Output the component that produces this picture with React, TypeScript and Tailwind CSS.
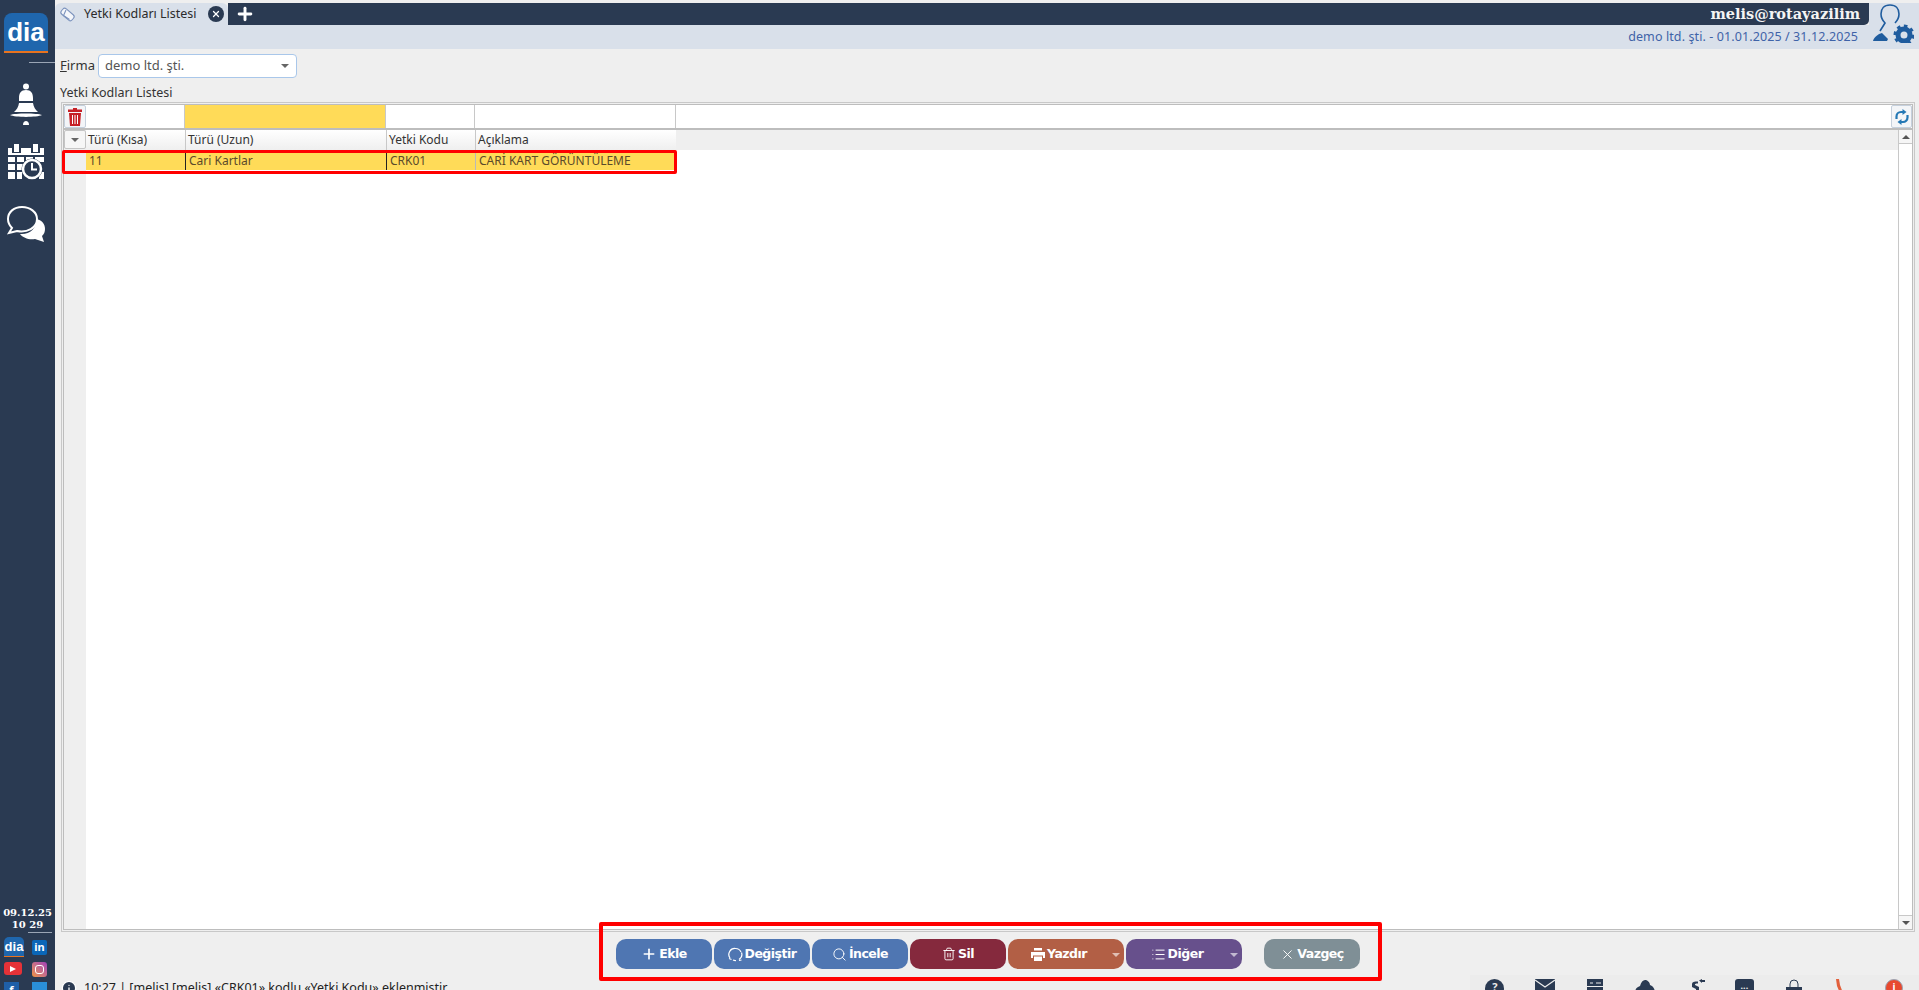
import type { ReactNode } from 'react'
import { Plus, Search, Trash2, X, List, Info } from 'lucide-react'

const uiFont = "font-['Noto_Sans',sans-serif]"

function Caret({ className = 'border-t-[#666]' }: { className?: string }) {
  return <span className={`block h-0 w-0 border-x-[4px] border-t-[4px] border-x-transparent ${className}`} />
}

function DiaLogo({ small }: { small?: boolean }) {
  return (
    <div className={small
      ? "flex h-[20px] w-[20px] items-center justify-center rounded-t-[5px] border-b border-[#e8731f] bg-[#1f66ad] font-['Liberation_Sans',sans-serif] text-[13px] font-bold text-white"
      : "flex h-[40px] w-[44px] items-center justify-center rounded-t-[8px] border-b-2 border-[#e8731f] bg-[#1f66ad] font-['Liberation_Sans',sans-serif] text-[26px] font-bold text-white"}>
      dia
    </div>
  )
}

function Bell() {
  return (
    <svg width="32" height="43" viewBox="0 0 32 43" fill="white">
      <circle cx="16" cy="3.500" r="3" />
      <path d="M16 7c-5 0-7 3-7 8v3h14v-3c0-5-2-8-7-8zM9 20h14c.5 4 2.500 7 5 9H4c2.500-2 4.500-5 5-9z" />
      <path d="M0 32c5-2 27-2 32 0-5 2.500-27 2.500-32 0z" />
      <path d="M13 42c0-3 1.500-4 3-4s3 1 3 4z" />
    </svg>
  )
}

function CalendarClock() {
  return (
    <svg width="36" height="36" viewBox="0 0 36 36" fill="white">
      <rect x="6" y="0" width="5" height="8" />
      <rect x="25" y="0" width="5" height="8" />
      <path d="M0 4h4v5h9V4h10v5h9V4h4v7H0z" />
      <path d="M0 13h7v5H0zM9 13h7v5H9zM18 13h7v5h-7zM27 13h9v5h-9zM0 20h7v6H0zM9 20h7v6H9zM0 28h7v7H0zM9 28h5v7H9zM31 28h5v7h-5z" />
      <circle cx="24" cy="25" r="10.500" fill="#2a3a52" />
      <circle cx="24" cy="25" r="9" fill="none" stroke="white" strokeWidth="2.500" />
      <path d="M24 19v6.500h5" fill="none" stroke="white" strokeWidth="2" />
    </svg>
  )
}

function Bubbles() {
  return (
    <svg width="40" height="38" viewBox="0 0 40 38">
      <path d="M30 14c6 1 9 5 9 10 0 3-1 5-3 7l2 6-9-3c-6 1-12-1-15-5 9 1 17-5 16-15z" fill="white" />
      <path d="M16 2C8 2 2 7 2 14c0 4 2 7 4 9l-3 5 8-2c10 2 20-3 20-12C31 7 24 2 16 2z" fill="#2a3a52" stroke="white" strokeWidth="2" />
    </svg>
  )
}

function Sidebar() {
  return (
    <aside className="flex h-full w-[55px] shrink-0 flex-col items-center bg-[#2a3a52]">
      <div className="mt-[13px] mr-[3px]"><DiaLogo /></div>
      <div className="mt-[9px] h-px w-[26px] self-end bg-[#9aa5b5]" />
      <div className="mt-[20px] mr-[3px]"><Bell /></div>
      <div className="mt-[18px] mr-[3px]"><CalendarClock /></div>
      <div className="mt-[25px] mr-[3px]"><Bubbles /></div>
      <div className="mt-auto flex flex-col items-center font-['DejaVu_Serif',serif] text-[10px] leading-[12px] font-bold text-white">
        <span>09.12.25</span>
        <span>10 29</span>
      </div>
      <div className="mt-[1px] mr-[3px] h-px w-[24px] self-end bg-[#9aa5b5]" />
      <div className="mt-[4px] grid h-[53px] grid-cols-2 gap-x-[8px] gap-y-[5px] overflow-hidden pl-[1px]">
        <DiaLogo small />
        <div className="mt-[3px] flex h-[15px] w-[15px] items-center justify-center rounded-[2px] bg-[#0a66b7] text-[11px] font-bold text-white">in</div>
        <div className="flex h-[13px] w-[18px] items-center justify-center rounded-[3px] bg-[#e53238]">
          <span className="h-0 w-0 border-y-[3.500px] border-l-[6px] border-y-transparent border-l-white" />
        </div>
        <div className="flex h-[15px] w-[15px] items-center justify-center rounded-[3px] bg-gradient-to-tr from-[#f09433] to-[#a33bb5]">
          <span className="h-[9px] w-[9px] rounded-[3px] border border-white" />
        </div>
        <div className="h-[15px] w-[15px] bg-[#1f5fa8] text-center text-[11px] font-bold text-white">f</div>
        <div className="h-[15px] w-[15px] bg-[#2a8fd8]" />
      </div>
    </aside>
  )
}

function Header() {
  return (
    <header className="shrink-0 bg-[#d9e0ea]">
      <div className="flex h-[25px] items-stretch bg-[#efefef] pt-[3px]">
        <div className="flex w-[173px] items-center rounded-t-[6px] bg-[#d9e0ea] pl-[4px]">
          <svg width="17" height="17" viewBox="0 0 17 17" fill="none" stroke="#7c93bd" strokeWidth="1.100">
            <rect x="1.500" y="5" width="14" height="7" rx="2.500" transform="rotate(40 8.500 8.500)" fill="#f4f6fa" />
            <path d="M7 4l-2.500 5.500 6 4" />
          </svg>
          <span className="ml-[8px] text-[12.500px] text-[#2b2b2b]">Yetki Kodları Listesi</span>
          <span className="ml-[11px] flex h-[16px] w-[16px] items-center justify-center rounded-full bg-[#2a3a52]">
            <X size={10} color="white" strokeWidth={3} />
          </span>
        </div>
        <div className="flex flex-1 items-center justify-between rounded-br-[5px] bg-[#2a3a52] pl-[7px] pr-[9px]">
          <Plus size={20} color="white" strokeWidth={3.500} />
          <span className="font-['DejaVu_Serif',serif] text-[14.500px] leading-none font-bold text-[#f4f4f4]">melis@rotayazilim</span>
        </div>
        <div className="w-[50px] bg-[#d9e0ea]" />
      </div>
      <div className="flex h-[24px] items-center justify-end pr-[61px] text-[12.500px] tracking-[0.1px] text-[#3f63a8]">
        demo ltd. şti. - 01.01.2025 / 31.12.2025
      </div>
    </header>
  )
}

function UserGear() {
  return (
    <div className="absolute top-[3px] right-[5px]">
      <svg width="42" height="40" viewBox="0 0 42 40">
        <path d="M18 2c-6 0-9 4-9 9 0 4 2 7 4 9l-5 8" fill="none" stroke="#1f5c9e" strokeWidth="1.600" />
        <path d="M18 2c6 0 9 4 9 9 0 4-2 7-4 9" fill="none" stroke="#1f5c9e" strokeWidth="1.600" />
        <path d="M1 38c1-4 5-7 9-8l6 6-1 2z" fill="#1f5c9e" />
        <circle cx="32" cy="32" r="6" fill="none" stroke="#1f5c9e" strokeWidth="5" />
        <circle cx="32" cy="32" r="9" fill="none" stroke="#1f5c9e" strokeWidth="3" strokeDasharray="3.500 3.500" />
      </svg>
    </div>
  )
}

function RedTrash() {
  return (
    <svg width="14" height="18" viewBox="0 0 14 18">
      <path d="M5 0h4v1.500h5V4H0V1.500h5z" fill="#c62026" />
      <path d="M1 5h12l-1 13H2z" fill="#c62026" />
      <path d="M4.500 7v9M7 7v9M9.500 7v9" stroke="white" strokeWidth="1" />
    </svg>
  )
}

function SyncIcon() {
  return (
    <svg width="14" height="16" viewBox="0 0 14 16" fill="none" stroke="#2478b5" strokeWidth="2.200">
      <path d="M8 3H6a4.500 4.500 0 0 0-4.500 4.500V10" />
      <path d="M6 13h2a4.500 4.500 0 0 0 4.500-4.500V6" />
      <path d="M7.500 0l4 3-4 3z" fill="#2478b5" stroke="none" />
      <path d="M6.500 10l-4 3 4 3z" fill="#2478b5" stroke="none" />
    </svg>
  )
}

function Grid() {
  return (
    <div className="relative mr-[4px] ml-[6px] h-[830px] shrink-0 border border-[#c8c8c8] bg-[#efefef] p-px">
      <div className="flex h-full flex-col border border-[#bdbdbd] bg-white">
        {/* filter row */}
        <div className="flex h-[25px] shrink-0 border-b-[2px] border-[#bdbdbd]">
          <div className="flex w-[22px] items-center justify-center rounded-[2px] border border-[#c5d0dd] bg-[#f3f5f8]">
            <RedTrash />
          </div>
          <div className="w-[99px] border-r border-[#c8c8c8]" />
          <div className="w-[201px] border-r border-[#c8c8c8] bg-[#ffdb58]" />
          <div className="w-[89px] border-r border-[#c8c8c8]" />
          <div className="w-[201px] border-r border-[#c8c8c8]" />
          <div className="flex-1" />
          <div className="flex w-[21px] items-center justify-center rounded-[2px] border border-[#c5d0dd] bg-[#f3f5f8]">
            <SyncIcon />
          </div>
        </div>
        <div className="flex min-h-0 flex-1">
          {/* row number column */}
          <div className="flex w-[22px] shrink-0 flex-col bg-[#efefef]">
            <div className="flex h-[19px] items-center justify-center rounded-[2px] border border-[#c5c5c5] bg-[#f6f6f6]">
              <Caret />
            </div>
          </div>
          <div className="flex min-w-0 flex-1 flex-col">
            <div className="flex h-[20px] shrink-0 bg-[#efefef] text-[12px] leading-[20px] text-[#333]">
              <div className="w-[99px] bg-gradient-to-b from-white to-[#efefef] pl-[2px]">Türü (Kısa)</div>
              <div className="w-[201px] border-l border-[#c8c8c8] bg-gradient-to-b from-white to-[#efefef] pl-[2px]">Türü (Uzun)</div>
              <div className="w-[89px] border-l border-[#c8c8c8] bg-gradient-to-b from-white to-[#efefef] pl-[2px]">Yetki Kodu</div>
              <div className="w-[201px] border-l border-[#c8c8c8] bg-gradient-to-b from-white to-[#efefef] pl-[2px]">Açıklama</div>
            </div>
            <div className="flex h-[20px] w-[590px] shrink-0 bg-[#ffdb58] text-[12px] leading-[22px] text-[#5b4a2a]">
              <div className="w-[99px] pl-[3px]">11</div>
              <div className="w-[201px] border-l border-[#222] pl-[3px]">Cari Kartlar</div>
              <div className="w-[89px] border-l border-[#222] pl-[3px]">CRK01</div>
              <div className="w-[201px] border-l border-[#b9b9b9] pl-[3px]">CARİ KART GÖRÜNTÜLEME</div>
            </div>
          </div>
          {/* scrollbar */}
          <div className="flex w-[14px] shrink-0 flex-col justify-between border-l border-[#c8c8c8] bg-white">
            <div className="flex h-[14px] items-center justify-center border-b border-[#c8c8c8] bg-[#f6f6f6]"><Caret className="rotate-180 border-t-[#555]" /></div>
            <div className="flex h-[14px] items-center justify-center border-t border-[#c8c8c8] bg-[#f6f6f6]"><Caret className="border-t-[#555]" /></div>
          </div>
        </div>
      </div>
      {/* red annotation over the selected row */}
      <div className="absolute top-[47px] left-0 h-[24px] w-[615px] rounded-[2px] border-[3px] border-[#ff0000]" />
    </div>
  )
}

function LoopIcon() {
  return (
    <svg width="15" height="15" viewBox="0 0 15 15" fill="none" stroke="white" strokeWidth="1.200">
      <path d="M2 11A6 6 0 0 1 7.500 1.500a6 6 0 0 1 5.500 3.500" />
      <path d="M13.500 5.500a6 6 0 0 1-2.500 7M8 13.500a6 6 0 0 1-3-.5" />
      <path d="M1 11.500l2.500 1M11 13.500l2.500-.5" />
    </svg>
  )
}

function PrinterIcon() {
  return (
    <svg width="14" height="13" viewBox="0 0 14 13" fill="white">
      <path d="M3 0h8v2.500H3zM0 4h14v6h-2V7.500H2V10H0z" />
      <path d="M3 8.500h8V13H3z" />
    </svg>
  )
}

type ActionProps = {
  label: string
  color: string
  icon: ReactNode
  caret?: boolean
}

function Action({ label, color, icon, caret }: ActionProps) {
  return (
    <button className={`relative flex h-[30px] items-center justify-center rounded-[10px] font-['DejaVu_Sans',sans-serif] text-[12.500px] font-bold tracking-[-0.5px] text-white ${color} ${caret ? 'w-[116px] pr-[14px]' : 'w-[96px]'}`}>
      <span className="mr-[2px]">{icon}</span>
      {label}
      {caret && <span className="absolute top-[14px] right-[4px]"><Caret className="border-t-white/60" /></span>}
    </button>
  )
}

function Toolbar() {
  return (
    <div className="relative flex h-[46px] shrink-0 items-start pt-[7px] pl-[561px]">
      <div className="flex gap-[2px]">
        <Action label="Ekle" color="bg-[#4f76b2]" icon={<Plus size={16} strokeWidth={2.500} />} />
        <Action label="Değiştir" color="bg-[#4f76b2]" icon={<LoopIcon />} />
        <Action label="İncele" color="bg-[#4f76b2]" icon={<Search size={15} strokeWidth={1.500} />} />
        <Action label="Sil" color="bg-[#85293d]" icon={<Trash2 size={14} strokeWidth={1.600} />} />
        <Action label="Yazdır" color="bg-[#b25f45]" icon={<PrinterIcon />} caret />
        <Action label="Diğer" color="bg-[#67508c]" icon={<List size={15} strokeWidth={1.600} />} caret />
      </div>
      <div className="ml-[22px]">
        <Action label="Vazgeç" color="bg-[#7f8f96]" icon={<X size={15} strokeWidth={1.500} />} />
      </div>
      {/* red annotation over the toolbar */}
      <div className="absolute top-[-10px] left-[544px] h-[59px] w-[783px] rounded-[2px] border-[4px] border-[#ff0000]" />
    </div>
  )
}

function StatusIcon({ children }: { children: ReactNode }) {
  return <div className="flex w-[50px] justify-center">{children}</div>
}

function StatusBar() {
  return (
    <div className="relative flex h-[12px] shrink-0 items-start pl-[6px]">
      <Info size={16} fill="#2a3a52" color="white" className="mt-[2px]" />
      <span className="mt-[2px] ml-[7px] text-[12.500px] leading-[16px] text-[#222]">
        10:27 | [melis] [melis] «CRK01» kodlu «Yetki Kodu» eklenmiştir.
      </span>
      {/* shortcut icons, cut by the window edge like in the picture */}
      <div className="absolute top-[-3px] right-0 flex h-[15px] w-[449px] items-start overflow-hidden bg-[#ececec] pt-[4px]">
        <StatusIcon>
          <span className="flex h-[19px] w-[19px] items-start justify-center rounded-full bg-[#2a3a52] text-[11px] leading-[16px] font-bold text-[#ececec]">?</span>
        </StatusIcon>
        <StatusIcon>
          <svg width="20" height="14" viewBox="0 0 20 14"><path d="M0 0h20v14H0z" fill="#2a3a52" /><path d="M0 1l10 7 10-7" fill="none" stroke="#ececec" strokeWidth="1.200" /></svg>
        </StatusIcon>
        <StatusIcon>
          <svg width="16" height="14" viewBox="0 0 16 14"><path d="M0 0h16v14H0z" fill="#2a3a52" /><path d="M3 4h3M9 4h5M0 7.500h16" stroke="#ececec" strokeWidth="1.200" /></svg>
        </StatusIcon>
        <StatusIcon>
          <svg width="20" height="14" viewBox="0 0 20 14"><path d="M0 14c0-4 2-6 5-7 1-4 3-6 5-6s5 2 5 5c3 1 5 4 5 8z" fill="#2a3a52" /></svg>
        </StatusIcon>
        <StatusIcon>
          <svg className="ml-[6px]" width="14" height="14" viewBox="0 0 14 14"><path d="M8 1.500l3-1.500v1h3v2h-3v1zM1 5c0-2 2-2.500 6-2.500v2C4 4.500 4 5 4 6l4 2v6H1v-2h4v-2L1 8z" fill="#2a3a52" /></svg>
        </StatusIcon>
        <StatusIcon>
          <span className="h-[14px] w-[19px] rounded-t-[3px] bg-[#2a3a52] text-center text-[9px] leading-[14px] font-bold text-[#ececec]">...</span>
        </StatusIcon>
        <StatusIcon>
          <svg width="16" height="14" viewBox="0 0 16 14"><path d="M4 8V5a4 4 0 0 1 8 0v3" fill="none" stroke="#2a3a52" strokeWidth="1" /><path d="M0 8h16v6H0z" fill="#2a3a52" /></svg>
        </StatusIcon>
        <StatusIcon>
          <svg className="mr-[10px]" width="8" height="14" viewBox="0 0 8 14"><path d="M1 0h3l1 6 3 8H5L2 7z" fill="#e2603c" /></svg>
        </StatusIcon>
        <StatusIcon>
          <span className="h-[18px] w-[18px] rounded-full border border-[#9aa5b5] bg-[#e8492f] text-center text-[10px] leading-[14px] font-bold text-white">i</span>
        </StatusIcon>
      </div>
    </div>
  )
}

export default function App() {
  return (
    <div className={`flex h-[990px] w-[1919px] overflow-hidden bg-[#efefef] ${uiFont}`}>
      <Sidebar />
      <main className="relative flex min-w-0 flex-1 flex-col">
        <Header />
        <UserGear />
        <div className="flex h-[29px] shrink-0 items-center pt-[5px] pl-[5px] text-[13px] text-[#333]">
          <span><span className="underline">F</span>irma</span>
          <div className="ml-[3px] flex h-[24px] w-[199px] items-center justify-between rounded-[4px] border border-[#a9c7ea] bg-white pr-[7px] pl-[6px] text-[#555]">
            demo ltd. şti.
            <Caret />
          </div>
        </div>
        <div className="flex h-[24px] shrink-0 items-center pt-[6px] pl-[5px] text-[12.500px] text-[#333]">Yetki Kodları Listesi</div>
        <Grid />
        <Toolbar />
        <StatusBar />
      </main>
    </div>
  )
}
